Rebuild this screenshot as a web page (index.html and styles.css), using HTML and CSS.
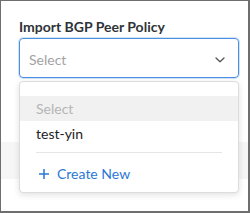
FILE: index.html
```html
<!DOCTYPE html>
<html lang="en">
<head>
  <meta charset="UTF-8">
  <meta name="viewport" content="width=device-width, initial-scale=1.0">
  <title>Import BGP Peer Policy</title>
  <link rel="stylesheet" href="styles.css">
</head>
<body>
  <div class="panel">
    <div class="field">
      <div class="field-label">Import BGP Peer Policy</div>
      <div class="select-wrap">
        <div class="select">
          <span class="placeholder">Select</span>
          <svg class="chevron" width="12" height="8" viewBox="0 0 12 8">
            <path d="M2 2 L6 5.8 L10 2" fill="none" stroke="#555" stroke-width="1.3" stroke-linecap="round" stroke-linejoin="round"/>
          </svg>
        </div>
        <div class="menu">
          <div class="option option-placeholder">Select</div>
          <div class="option">test-yin</div>
          <div class="menu-divider"></div>
          <div class="create-new">
            <svg width="12" height="12" viewBox="0 0 12 12">
              <path d="M6 1 V11 M1 6 H11" stroke="#2a78d6" stroke-width="1.5"/>
            </svg>
            <span>Create New</span>
          </div>
        </div>
      </div>
    </div>
    <div class="band"></div>
  </div>
</body>
</html>
```

FILE: styles.css
```css
body {
  margin: 0;
  font-family: Lato, "Open Sans", sans-serif;
}
.panel {
  box-sizing: border-box;
  width: 250px;
  height: 213px;
  border-top: 1px solid #6e6e6e;
  border-left: 1px solid #6e6e6e;
  border-right: 2px solid #6e6e6e;
  border-bottom: 2px solid #6e6e6e;
  background: #fff;
  overflow: hidden;
}
.field {
  padding: 17px 9px 0 18px;
}
.field-label {
  font-size: 14px;
  line-height: 18px;
  font-weight: bold;
  color: #2e3338;
  margin-bottom: 2px;
}
.select-wrap {
  position: relative;
}
.select {
  box-sizing: border-box;
  height: 40px;
  width: 220px;
  border: 1px solid #4a90e2;
  border-radius: 4px;
  box-shadow: 0 0 0 1px rgba(74, 144, 226, 0.25);
  display: flex;
  align-items: center;
  justify-content: space-between;
  padding: 2px 12px 0 9px;
}
.placeholder {
  font-size: 14px;
  color: #a3a3a3;
}
.chevron {
  margin-top: 2px;
}
.menu {
  position: absolute;
  top: 43px;
  left: 0;
  box-sizing: border-box;
  width: 220px;
  background: #fff;
  border: 1px solid #dcdcdc;
  border-radius: 4px;
  box-shadow: 0 2px 6px rgba(0, 0, 0, 0.12);
  padding: 14px 0 8px;
}
.option {
  font-size: 14px;
  line-height: 25px;
  padding-left: 16px;
  color: #222;
}
.option-placeholder {
  background: #f1f1f1;
  color: #b5b5b5;
}
.menu-divider {
  height: 1px;
  background: #e6e6e6;
  margin: 6px 16px 0;
}
.create-new {
  display: flex;
  align-items: center;
  gap: 7px;
  padding: 11px 0 0 18px;
  font-size: 14px;
  line-height: 20px;
  color: #2a78d6;
}
.band {
  margin-top: 64px;
  height: 37px;
  background: #f6f6f6;
}
```
